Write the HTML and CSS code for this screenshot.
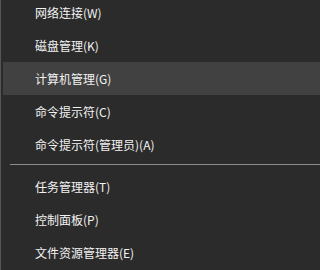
FILE: index.html
```html
<!DOCTYPE html>
<html lang="zh-CN">
<head>
<meta charset="utf-8">
<link rel="stylesheet" href="styles.css">
</head>
<body>
<div class="menu">
  <div class="item">网络连接(W)</div>
  <div class="item">磁盘管理(K)</div>
  <div class="item hover">计算机管理(G)</div>
  <div class="item">命令提示符(C)</div>
  <div class="item">命令提示符(管理员)(A)</div>
  <div class="sep"></div>
  <div class="item">任务管理器(T)</div>
  <div class="item">控制面板(P)</div>
  <div class="item">文件资源管理器(E)</div>
</div>
</body>
</html>
```
FILE: styles.css
```css
html, body {
  margin: 0;
  padding: 0;
  background: #2b2b2b;
  height: 270px;
  overflow: hidden;
}
.menu {
  display: flex;
  flex-direction: column;
  margin-top: -4px;
  height: 280px;
  border-left: 1px solid #555555;
  padding-left: 2px;
  background: #2b2b2b;
  font-family: "Noto Sans CJK SC", "Noto Sans", sans-serif;
  font-size: 12px;
  color: #f2f2f2;
}
.item {
  height: 33px;
  line-height: 33px;
  padding-left: 32px;
  white-space: nowrap;
}
.item.hover {
  background: #414141;
}
.sep {
  height: 1px;
  background: #8c8c8c;
  margin: 3px 0 5px 7px;
}
```
